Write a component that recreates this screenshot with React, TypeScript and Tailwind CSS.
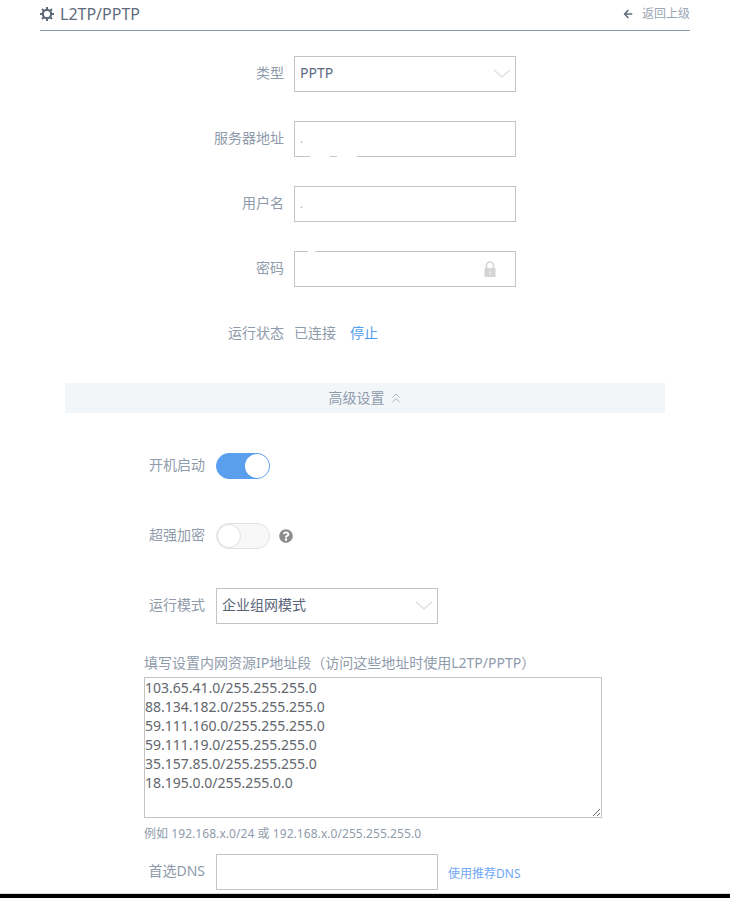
import { FaArrowLeft, FaQuestionCircle } from 'react-icons/fa';
import { ChevronsUp } from 'lucide-react';

const fontStack = '[font-family:"Noto_Sans","Noto_Sans_CJK_SC",sans-serif]';

const ipList = `103.65.41.0/255.255.255.0
88.134.182.0/255.255.255.0
59.111.160.0/255.255.255.0
59.111.19.0/255.255.255.0
35.157.85.0/255.255.255.0
18.195.0.0/255.255.0.0`;

function GearIcon() {
  return (
    <svg width="14" height="14" viewBox="0 0 14 14" className="shrink-0">
      <circle cx="7" cy="7" r="4.2" fill="none" stroke="#5f6b7c" strokeWidth="2.2" />
      <path
        d="M7 0v2.5M7 11.5V14M0 7h2.5M11.5 7H14M2 2l1.8 1.8M10.2 10.2L12 12M12 2l-1.8 1.8M3.8 10.2L2 12"
        stroke="#5f6b7c"
        strokeWidth="2"
      />
    </svg>
  );
}

function Chevron() {
  return (
    <svg width="18" height="10" viewBox="0 0 18 10" fill="none" className="shrink-0">
      <path d="M1 1l8 7 8-7" stroke="#dcdcdc" strokeWidth="1.2" />
    </svg>
  );
}

function LockIcon() {
  return (
    <svg width="12" height="16" viewBox="0 0 12 16" className="shrink-0">
      <path d="M2.5 8V4.5a3.5 3.5 0 0 1 7 0V8" fill="none" stroke="#d4d4d4" strokeWidth="1.6" />
      <rect x="0.5" y="7" width="11" height="9" fill="#d4d4d4" />
      <rect x="5.5" y="10.5" width="1" height="3" fill="#fff" />
    </svg>
  );
}

function Field({ width, children }: { width: string; children?: React.ReactNode }) {
  return (
    <div className={`relative flex h-9 items-center justify-between border border-[#c4c4c4] bg-white pl-[5px] pr-1 text-sm text-[#5a6a80] ${width}`}>
      {children}
    </div>
  );
}

function Toggle({ on }: { on: boolean }) {
  return (
    <div className={`flex h-[26px] w-[54px] items-center rounded-full border ${on ? 'justify-end border-[#5a9eee] bg-[#5a9eee]' : 'justify-start border-[#dfe1e6] bg-[#f8f8f8]'}`}>
      <div className={`h-6 w-6 rounded-full bg-white ${on ? '' : 'border border-[#dfe1e6]'}`} />
    </div>
  );
}

function MainRow({ label, children }: { label: string; children: React.ReactNode }) {
  return (
    <div className="flex h-9 items-center">
      <div className="w-[284px] pb-[2px] text-right text-sm text-[#8f9bab]">{label}</div>
      <div className="ml-[10px] flex items-center">{children}</div>
    </div>
  );
}

function AdvRow({ label, children }: { label: string; children: React.ReactNode }) {
  return (
    <div className="flex items-center">
      <div className="w-[205px] pb-[2px] text-right text-sm text-[#8f9bab]">{label}</div>
      <div className="ml-[11px] flex items-center">{children}</div>
    </div>
  );
}

export default function App() {
  return (
    <div className={`flex h-[898px] w-[730px] flex-col overflow-hidden bg-white ${fontStack}`}>
      {/* Header */}
      <div className="mx-10 flex h-[31px] shrink-0 items-center justify-between border-b border-[#8b9bb0] pb-[2px]">
        <div className="flex items-center gap-[6px] text-[#5f6b7c]">
          <GearIcon />
          <span className="text-base leading-none">L2TP/PPTP</span>
        </div>
        <div className="flex items-center gap-[9px]">
          <FaArrowLeft className="h-[10px] w-[10px] text-[#5f6b7c]" />
          <span className="text-xs text-[#9aa5b3]">返回上级</span>
        </div>
      </div>

      {/* Basic fields */}
      <div className="mt-[25px] flex flex-col gap-[29px]">
        <MainRow label="类型">
          <Field width="w-[222px]">
            <span className="pb-[2px]">PPTP</span>
            <Chevron />
          </Field>
        </MainRow>
        <MainRow label="服务器地址">
          <Field width="w-[222px]">
            <span className="text-[10px] text-[#a0a0a0]">.</span>
            <div className="absolute -bottom-px left-[15px] h-px w-5 bg-white" />
            <div className="absolute -bottom-px left-[42px] h-px w-5 bg-white" />
          </Field>
        </MainRow>
        <MainRow label="用户名">
          <Field width="w-[222px]">
            <span className="text-[10px] text-[#a0a0a0]">.</span>
          </Field>
        </MainRow>
        <MainRow label="密码">
          <Field width="w-[222px]">
            <div className="absolute -top-px left-[13px] h-px w-[7px] bg-white" />
            <span />
            <span className="mr-[15px] mb-[1px]">
              <LockIcon />
            </span>
          </Field>
        </MainRow>
        <MainRow label="运行状态">
          <span className="pb-[2px] text-sm text-[#8f9bab]">已连接</span>
          <span className="ml-[14px] pb-[2px] text-sm text-[#4f9cf0]">停止</span>
        </MainRow>
      </div>

      {/* Advanced settings bar */}
      <div className="mx-[65px] mt-[31px] flex h-[30px] shrink-0 items-center justify-center gap-[3px] bg-[#f2f6f9] pl-[2px] text-sm text-[#8f9bab]">
        <span>高级设置</span>
        <ChevronsUp className="h-4 w-4 text-[#aab3be]" strokeWidth={1.5} />
      </div>

      <div className="mt-[40px] flex flex-col">
        <AdvRow label="开机启动">
          <Toggle on />
        </AdvRow>
        <div className="mt-[44px]">
          <AdvRow label="超强加密">
            <Toggle on={false} />
            <FaQuestionCircle className="ml-[9px] h-[14px] w-[14px] text-[#8c8c8c]" />
          </AdvRow>
        </div>
        <div className="mt-[39px]">
          <AdvRow label="运行模式">
            <Field width="w-[222px]">
              <span className="pb-[2px] text-[#5a6478]">企业组网模式</span>
              <Chevron />
            </Field>
          </AdvRow>
        </div>
      </div>

      {/* Resource list */}
      <div className="ml-[144px] mt-[29px] flex w-[458px] flex-col">
        <div className="h-[24px] whitespace-nowrap text-sm leading-[20px] text-[#8f9bab]">
          填写设置内网资源IP地址段（访问这些地址时使用L2TP/PPTP）
        </div>
        <textarea
          readOnly
          defaultValue={ipList}
          className="block h-[141px] w-[458px] border border-[#c4c4c4] p-0 text-sm leading-[19px] text-[#62666d] outline-none"
        />
        <div className="mt-[7px] whitespace-nowrap text-xs leading-[18px] tracking-[0.06px] text-[#8f9bab]">
          例如 192.168.x.0/24 或 192.168.x.0/255.255.255.0
        </div>
      </div>

      <div className="mt-[11px] flex items-center">
        <div className="w-[205px] pb-[2px] text-right text-sm text-[#8f9bab]">首选DNS</div>
        <div className="ml-[11px]">
          <Field width="w-[222px]" />
        </div>
        <span className="ml-[10px] mt-[4px] text-xs text-[#6fa8f5]">使用推荐DNS</span>
      </div>

      <div className="mt-[3px] h-px w-full shrink-0 bg-[#d8d8d8]" />
      <div className="w-full flex-1 bg-black" />
    </div>
  );
}
